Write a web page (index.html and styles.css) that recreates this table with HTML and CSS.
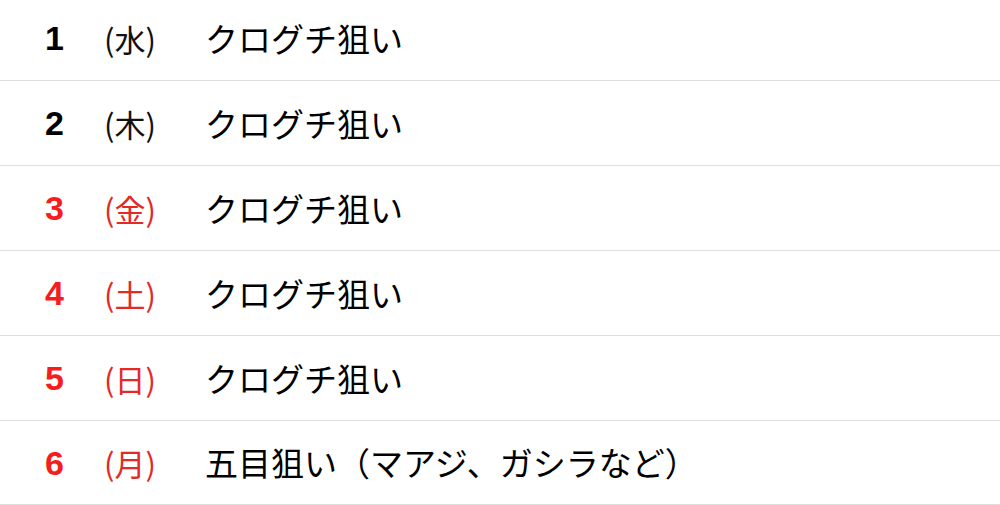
FILE: index.html
```html
<!DOCTYPE html>
<html lang="ja">
<head>
<meta charset="utf-8">
<title>釣行予定</title>
<link rel="stylesheet" href="styles.css">
</head>
<body>
<ul class="list">
  <li class="row"><span class="num">1</span><span class="wd">(水)</span><span class="txt">クログチ狙い</span></li>
  <li class="row"><span class="num">2</span><span class="wd">(木)</span><span class="txt">クログチ狙い</span></li>
  <li class="row holiday"><span class="num">3</span><span class="wd">(金)</span><span class="txt">クログチ狙い</span></li>
  <li class="row holiday"><span class="num">4</span><span class="wd">(土)</span><span class="txt">クログチ狙い</span></li>
  <li class="row holiday"><span class="num">5</span><span class="wd">(日)</span><span class="txt">クログチ狙い</span></li>
  <li class="row holiday"><span class="num">6</span><span class="wd">(月)</span><span class="txt">五目狙い（マアジ、ガシラなど）</span></li>
</ul>
</body>
</html>
```
FILE: styles.css
```css
html, body {
  margin: 0;
  padding: 0;
  background: #ffffff;
  overflow: hidden;
}

.list {
  list-style: none;
  margin: -4px 0 0 0;
  padding: 0;
}

.row {
  display: grid;
  grid-template-columns: 64px 141px 1fr;
  align-items: center;
  height: 84px;
  border-bottom: 1px solid #dedede;
  color: #000000;
  font-family: "Noto Sans CJK JP", sans-serif;
}

.row:last-child {
  height: 83px;
}

.num {
  font-family: "Liberation Sans", Arial, sans-serif;
  font-weight: bold;
  font-size: 34px;
  text-align: right;
  line-height: 1;
}

.wd {
  padding-left: 40px;
  font-size: 31px;
  line-height: 1;
  color: #111111;
}

.txt {
  font-size: 33px;
  line-height: 1;
  white-space: nowrap;
  color: #000000;
}

.holiday .num {
  color: #f51d1d;
}

.holiday .wd {
  color: #e22b27;
}
```
